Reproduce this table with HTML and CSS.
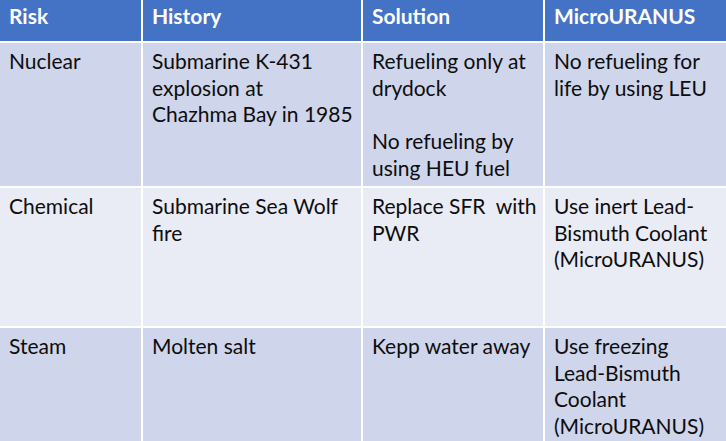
FILE: index.html
```html
<!DOCTYPE html>
<html>
<head>
<meta charset="utf-8">
<link rel="stylesheet" href="styles.css">
</head>
<body>
<div class="table">
  <div class="cell head">Risk</div>
  <div class="cell head">History</div>
  <div class="cell head">Solution</div>
  <div class="cell head">MicroURANUS</div>

  <div class="cell odd">Nuclear</div>
  <div class="cell odd">Submarine K-431<br>explosion at<br>Chazhma Bay in 1985</div>
  <div class="cell odd">Refueling only at<br>drydock<br><br>No refueling by<br>using HEU fuel</div>
  <div class="cell odd">No refueling for<br>life by using LEU</div>

  <div class="cell even">Chemical</div>
  <div class="cell even">Submarine Sea Wolf<br>fire</div>
  <div class="cell even">Replace SFR&nbsp; with<br>PWR</div>
  <div class="cell even">Use inert Lead-<br>Bismuth Coolant<br>(MicroURANUS)</div>

  <div class="cell odd">Steam</div>
  <div class="cell odd">Molten salt</div>
  <div class="cell odd">Kepp water away</div>
  <div class="cell odd">Use freezing<br>Lead-Bismuth<br>Coolant<br>(MicroURANUS)</div>
</div>
</body>
</html>
```

FILE: styles.css
```css
html, body {
  margin: 0;
  padding: 0;
  background: #ffffff;
  overflow: hidden;
}
body {
  width: 726px;
  height: 441px;
}
.table {
  display: grid;
  grid-template-columns: 141px 218px 180px 183px;
  grid-template-rows: 41px 143px 138px 113px;
  gap: 2px;
  height: 441px;
  overflow: hidden;
  background: #ffffff;
  font-family: "Lato", "Open Sans", sans-serif;
  font-size: 21px;
  line-height: 26.7px;
  color: #0d0d0d;
}
.cell {
  padding: 5px 6px 0 9px;
  white-space: nowrap;
  overflow: hidden;
}
.head {
  background: #4472c4;
  color: #ffffff;
  font-weight: bold;
  padding-top: 3px;
}
.odd {
  background: #cfd5ea;
}
.even {
  background: #e9ebf5;
}
```
